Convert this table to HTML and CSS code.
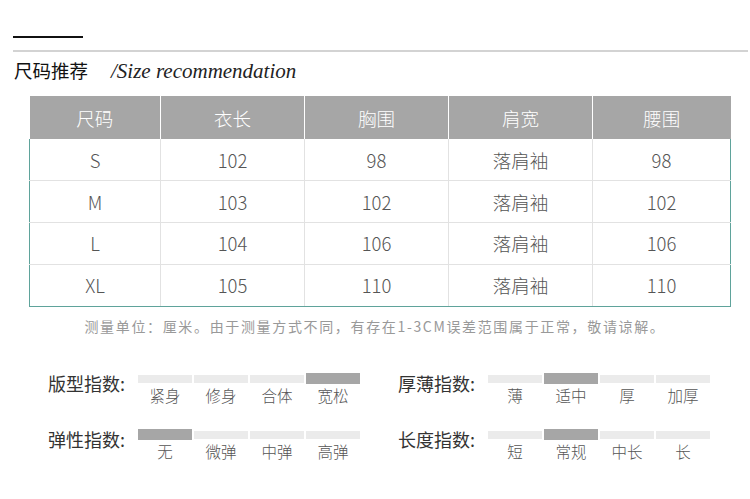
FILE: index.html
```html
<!DOCTYPE html>
<html lang="zh">
<head>
<meta charset="utf-8">
<link rel="stylesheet" href="styles.css">
</head>
<body>
<div class="page">
  <div class="rule-short"></div>
  <div class="rule-long"></div>
  <div class="title"><span class="title-cn">尺码推荐</span><span class="title-en">/Size recommendation</span></div>
  <table class="size-table">
    <thead>
      <tr><th class="c1">尺码</th><th class="c2">衣长</th><th class="c3">胸围</th><th class="c4">肩宽</th><th class="c5">腰围</th></tr>
    </thead>
    <tbody>
      <tr><td>S</td><td>102</td><td>98</td><td>落肩袖</td><td>98</td></tr>
      <tr><td>M</td><td>103</td><td>102</td><td>落肩袖</td><td>102</td></tr>
      <tr><td>L</td><td>104</td><td>106</td><td>落肩袖</td><td>106</td></tr>
      <tr><td>XL</td><td>105</td><td>110</td><td>落肩袖</td><td>110</td></tr>
    </tbody>
  </table>
  <p class="note">测量单位：厘米。由于测量方式不同，有存在1-3CM误差范围属于正常，敬请谅解。</p>
  <div class="indexes">
    <div class="index">
      <div class="index-label">版型指数:</div>
      <div class="scale">
        <div class="step"><div class="bar-wrap"><div class="bar"></div></div><span>紧身</span></div>
        <div class="step"><div class="bar-wrap"><div class="bar"></div></div><span>修身</span></div>
        <div class="step"><div class="bar-wrap"><div class="bar"></div></div><span>合体</span></div>
        <div class="step"><div class="bar-wrap"><div class="bar on"></div></div><span>宽松</span></div>
      </div>
    </div>
    <div class="index">
      <div class="index-label">厚薄指数:</div>
      <div class="scale">
        <div class="step"><div class="bar-wrap"><div class="bar"></div></div><span>薄</span></div>
        <div class="step"><div class="bar-wrap"><div class="bar on"></div></div><span>适中</span></div>
        <div class="step"><div class="bar-wrap"><div class="bar"></div></div><span>厚</span></div>
        <div class="step"><div class="bar-wrap"><div class="bar"></div></div><span>加厚</span></div>
      </div>
    </div>
    <div class="index">
      <div class="index-label">弹性指数:</div>
      <div class="scale">
        <div class="step"><div class="bar-wrap"><div class="bar on"></div></div><span>无</span></div>
        <div class="step"><div class="bar-wrap"><div class="bar"></div></div><span>微弹</span></div>
        <div class="step"><div class="bar-wrap"><div class="bar"></div></div><span>中弹</span></div>
        <div class="step"><div class="bar-wrap"><div class="bar"></div></div><span>高弹</span></div>
      </div>
    </div>
    <div class="index">
      <div class="index-label">长度指数:</div>
      <div class="scale">
        <div class="step"><div class="bar-wrap"><div class="bar"></div></div><span>短</span></div>
        <div class="step"><div class="bar-wrap"><div class="bar on"></div></div><span>常规</span></div>
        <div class="step"><div class="bar-wrap"><div class="bar"></div></div><span>中长</span></div>
        <div class="step"><div class="bar-wrap"><div class="bar"></div></div><span>长</span></div>
      </div>
    </div>
  </div>
</div>
</body>
</html>
```

FILE: styles.css
```css
* { box-sizing: border-box; }
html, body { margin: 0; padding: 0; background: #fff; }
body {
  font-family: "Noto Sans CJK SC", "Noto Sans", sans-serif;
  color: #555;
}
.page {
  width: 750px;
  height: 499px;
  padding-top: 36px;
  overflow: hidden;
}
.rule-short {
  margin-left: 13px;
  width: 70px;
  height: 2px;
  background: #111;
}
.rule-long {
  margin-left: 13px;
  margin-top: 12px;
  width: 735px;
  height: 2px;
  background: #d3d3d3;
}
.title {
  margin-top: 6px;
  margin-left: 14px;
  height: 24px;
  line-height: 24px;
  display: flex;
  align-items: baseline;
}
.title-cn {
  font-size: 18.5px;
  color: #111;
}
.title-en {
  margin-left: 23px;
  font-family: "Liberation Serif", serif;
  font-style: italic;
  font-size: 21px;
  color: #222;
}
.size-table {
  margin-top: 14px;
  margin-left: 29px;
  width: 701px;
  border-collapse: collapse;
  table-layout: fixed;
  font-size: 18.5px;
  font-weight: 300;
}
.size-table th {
  background: #a6a6a6;
  color: #fff;
  font-weight: 300;
  height: 43px;
  padding: 0;
  border-left: 1px solid #fff;
}
.size-table th.c1 { width: 131px; border-left: none; }
.size-table th.c2, .size-table th.c3, .size-table th.c4 { width: 144px; }
.size-table th.c5 { width: 138px; }
.size-table td {
  height: 41.75px;
  padding: 0;
  text-align: center;
  color: #555;
  border: 1px solid #e2e2e2;
}
.size-table tr td:first-child { border-left: 1px solid #5fa39b; }
.size-table tr td:last-child { border-right: 1px solid #5fa39b; }
.size-table tbody tr:last-child td { border-bottom: 1px solid #5fa39b; }
.size-table tbody tr:first-child td { border-top: none; }
.note {
  margin: 9px 0 0 0;
  text-align: center;
  font-size: 14px;
  line-height: 20px;
  letter-spacing: 1.65px;
  color: #999;
}
.indexes {
  margin-top: 35px;
  margin-left: 48px;
  display: grid;
  grid-template-columns: 350px 350px;
  row-gap: 23px;
}
.index {
  display: flex;
  align-items: flex-start;
}
.index-label {
  width: 90px;
  font-size: 18px;
  line-height: 24px;
  color: #333;
}
.scale {
  display: flex;
  gap: 2px;
  margin-top: 3px;
}
.step {
  width: 54px;
  display: flex;
  flex-direction: column;
  align-items: center;
}
.bar-wrap {
  width: 100%;
  height: 10px;
  display: flex;
  align-items: center;
}
.bar {
  width: 100%;
  height: 8px;
  background: #ebebeb;
}
.bar.on {
  height: 11px;
  background: #a6a6a6;
}
.step span {
  margin-top: 2px;
  font-size: 15.5px;
  line-height: 18px;
  font-weight: 300;
  color: #555;
}
```
